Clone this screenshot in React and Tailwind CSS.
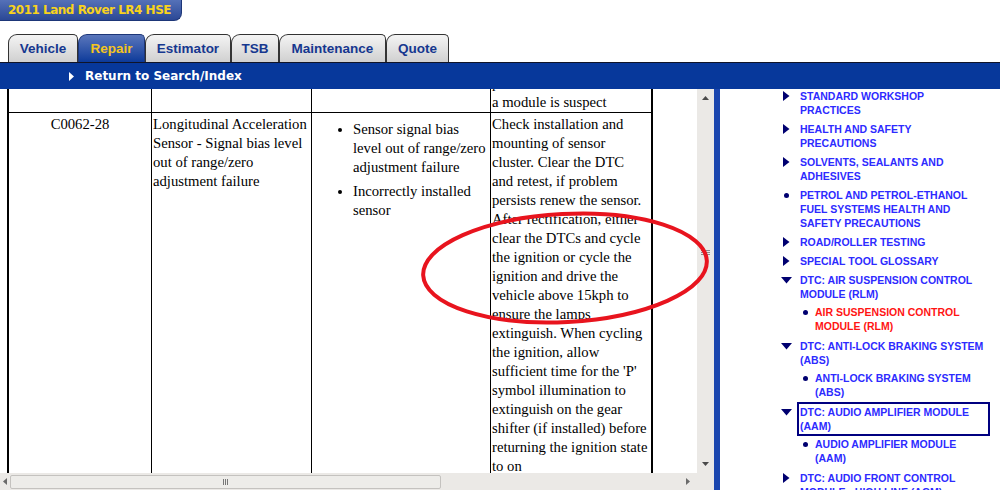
import React from "react";

const tabs = [
  { label: "Vehicle", w: "w-[70px]" },
  { label: "Repair", w: "w-[67px]", active: true },
  { label: "Estimator", w: "w-[86px]" },
  { label: "TSB", w: "w-[48px]" },
  { label: "Maintenance", w: "w-[107px]" },
  { label: "Quote", w: "w-[63px]" },
];

const tree = [
  { icon: "right", lines: ["STANDARD WORKSHOP", "PRACTICES"] },
  { icon: "right", lines: ["HEALTH AND SAFETY", "PRECAUTIONS"] },
  { icon: "right", lines: ["SOLVENTS, SEALANTS AND", "ADHESIVES"] },
  { icon: "dot", lines: ["PETROL AND PETROL-ETHANOL", "FUEL SYSTEMS HEALTH AND", "SAFETY PRECAUTIONS"] },
  { icon: "right", lines: ["ROAD/ROLLER TESTING"] },
  { icon: "right", lines: ["SPECIAL TOOL GLOSSARY"] },
  {
    icon: "down",
    lines: ["DTC: AIR SUSPENSION CONTROL", "MODULE (RLM)"],
    children: [{ lines: ["AIR SUSPENSION CONTROL", "MODULE (RLM)"], active: true }],
  },
  {
    icon: "down",
    lines: ["DTC: ANTI-LOCK BRAKING SYSTEM", "(ABS)"],
    children: [{ lines: ["ANTI-LOCK BRAKING SYSTEM", "(ABS)"] }],
  },
  {
    icon: "down",
    lines: ["DTC: AUDIO AMPLIFIER MODULE", "(AAM)"],
    boxed: true,
    children: [{ lines: ["AUDIO AMPLIFIER MODULE", "(AAM)"] }],
  },
  { icon: "right", lines: ["DTC: AUDIO FRONT CONTROL", "MODULE - HIGH LINE (AGM)"] },
];

const action = [
  "Check installation and",
  "mounting of sensor",
  "cluster. Clear the DTC",
  "and retest, if problem",
  "persists renew the sensor.",
  "After rectification, either",
  "clear the DTCs and cycle",
  "the ignition or cycle the",
  "ignition and drive the",
  "vehicle above 15kph to",
  "ensure the lamps",
  "extinguish. When cycling",
  "the ignition, allow",
  "sufficient time for the 'P'",
  "symbol illumination to",
  "extinguish on the gear",
  "shifter (if installed) before",
  "returning the ignition state",
  "to on",
];

function TreeIcon({ type }) {
  if (type === "down")
    return (
      <svg width="11" height="7" viewBox="0 0 11 7" className="mt-[4px]">
        <path d="M0 0h11L5.5 6.5z" fill="#000070" />
      </svg>
    );
  if (type === "dot")
    return <span className="mt-[5px] ml-[3px] w-[5px] h-[5px] rounded-full bg-[#000070]" />;
  return (
    <svg width="7" height="10" viewBox="0 0 7 10" className="mt-[2px] ml-[2px]">
      <path d="M0 0l6.5 5L0 10z" fill="#000070" />
    </svg>
  );
}

function Lines({ lines }) {
  return lines.map((l, i) => (
    <div key={i} className="whitespace-nowrap">
      {l}
    </div>
  ));
}

export default function App() {
  return (
    <div className="relative w-[1000px] h-[490px] overflow-hidden bg-white">
      {/* header badge */}
      <div className="h-[34px]">
        <div className="w-[182px] h-[21px] rounded-br-[8px] border-r border-b border-[#1d3678] bg-gradient-to-b from-[#5571b8] to-[#2b4895] pl-[8px] flex items-center font-['DejaVu_Sans',Verdana,sans-serif] font-bold text-[12px] tracking-[-0.5px] text-[#f8d21c]">
          2011 Land Rover LR4 HSE
        </div>
      </div>

      {/* tabs */}
      <div className="flex items-end h-[28px] pl-[8px]">
        {tabs.map((t) => (
          <div
            key={t.label}
            className={`${t.w} h-[28px] rounded-tl-[9px] rounded-tr-[5px] border border-b-0 flex items-center justify-center pt-[1px] font-['Liberation_Sans',Arial,sans-serif] font-bold text-[13.5px] ${
              t.active
                ? "border-[#1d3678] bg-gradient-to-b from-[#5a76bb] to-[#0b3a9a] text-[#f5c521]"
                : "border-[#333] bg-gradient-to-b from-[#f4f4f4] to-[#d0d0d0] text-[#16378f]"
            }`}
          >
            {t.label}
          </div>
        ))}
      </div>

      {/* nav bar */}
      <div className="h-[1px] bg-[#101428]" />
      <div className="h-[26px] bg-[#07389b] flex items-center pl-[69px] gap-[11px]">
        <svg width="5" height="9" viewBox="0 0 5 9">
          <path d="M0 0l5 4.5L0 9z" fill="#fff" />
        </svg>
        <span className="font-['DejaVu_Sans',Verdana,sans-serif] font-bold text-[12px] text-white">
          Return to Search/Index
        </span>
      </div>

      {/* content */}
      <div className="flex h-[401px]">
        <div className="w-[714px] flex flex-col">
          <div className="flex h-[384px]">
            {/* table area */}
            <div className="w-[697px] overflow-hidden font-['Liberation_Serif','Times_New_Roman',serif] text-[14.7px] leading-[19px] text-black">
              <div className="mt-[-16px] ml-[7px] w-[646px] border-l-2 border-r-2 border-black">
                <div className="flex border-b border-black">
                  <div className="w-[143px] border-r border-black" />
                  <div className="w-[160px] border-r border-black" />
                  <div className="w-[179px] border-r border-black" />
                  <div className="w-[160px] pl-[1px] pt-[1px]">
                    <div>problems remain and</div>
                    <div>a module is suspect</div>
                  </div>
                </div>
                <div className="flex h-[420px]">
                  <div className="w-[143px] border-r border-black pt-[2px] text-center">C0062-28</div>
                  <div className="w-[160px] border-r border-black pt-[2px] pl-[1px]">
                    <Lines lines={["Longitudinal Acceleration", "Sensor - Signal bias level", "out of range/zero", "adjustment failure"]} />
                  </div>
                  <div className="w-[179px] border-r border-black pt-[7px]">
                    <ul className="list-disc pl-[41px] flex flex-col gap-[5px]">
                      <li>
                        <Lines lines={["Sensor signal bias", "level out of range/zero", "adjustment failure"]} />
                      </li>
                      <li>
                        <Lines lines={["Incorrectly installed", "sensor"]} />
                      </li>
                    </ul>
                  </div>
                  <div className="w-[160px] pt-[2px] pl-[1px]">
                    <Lines lines={action} />
                  </div>
                </div>
              </div>
            </div>
            {/* vertical scrollbar */}
            <div className="w-[17px] bg-[#ebe9e6] flex flex-col items-center pt-[7px] pb-[7px]">
              <svg width="7" height="4" viewBox="0 0 7 4">
                <path d="M0 4L3.5 0 7 4z" fill="#4a4a4a" />
              </svg>
              <div className="mt-[150px] flex flex-col gap-[1px] w-[9px]">
                <div className="h-[1px] bg-[#8a8a8a]" />
                <div className="h-[1px] bg-[#8a8a8a]" />
                <div className="h-[1px] bg-[#8a8a8a]" />
              </div>
              <div className="flex-1" />
              <svg width="7" height="4" viewBox="0 0 7 4">
                <path d="M0 0h7L3.5 4z" fill="#4a4a4a" />
              </svg>
            </div>
          </div>
          {/* horizontal scrollbar */}
          <div className="flex h-[17px] bg-[#ebe9e6]">
            <div className="w-[697px] flex items-center px-[3px]">
              <svg width="4" height="7" viewBox="0 0 4 7">
                <path d="M4 0v7L0 3.5z" fill="#6a6a6a" />
              </svg>
              <div className="ml-[3px] w-[431px] h-[14px] rounded-[2px] border border-[#c4c2bf] bg-[#edece9] flex items-center justify-center gap-[1px]">
                <div className="w-[1px] h-[6px] bg-[#777]" />
                <div className="w-[1px] h-[6px] bg-[#777]" />
                <div className="w-[1px] h-[6px] bg-[#777]" />
              </div>
              <div className="flex-1" />
              <svg width="4" height="7" viewBox="0 0 4 7" className="mr-[4px]">
                <path d="M0 0v7l4-3.5z" fill="#6a6a6a" />
              </svg>
            </div>
            <div className="w-[17px]" />
          </div>
        </div>

        {/* blue divider */}
        <div className="w-[6px] bg-[#1b46ae]" />

        {/* tree pane */}
        <div className="flex-1 overflow-hidden pl-[61px] font-['Liberation_Sans',Arial,sans-serif] font-bold text-[10.5px] leading-[14px] text-[#2d2bff]">
          <div className="flex flex-col gap-[5px]">
            {tree.map((item, i) => (
              <div key={i}>
                <div className="flex">
                  <div className="w-[19px] flex items-start">
                    <TreeIcon type={item.icon} />
                  </div>
                  <div className={item.boxed ? "w-[187px] outline-2 outline-offset-1 outline-[#000080]" : ""}>
                    <Lines lines={item.lines} />
                  </div>
                </div>
                {item.children && (
                  <div className="pl-[19px] pt-[4px] pb-[1px]">
                    {item.children.map((c, j) => (
                      <div key={j} className="flex">
                        <div className="w-[15px] flex items-start">
                          <span className="mt-[5px] ml-[3px] w-[5px] h-[5px] rounded-full bg-[#000070]" />
                        </div>
                        <div className={c.active ? "text-[#ff1414]" : ""}>
                          <Lines lines={c.lines} />
                        </div>
                      </div>
                    ))}
                  </div>
                )}
              </div>
            ))}
          </div>
        </div>
      </div>

      {/* red circle annotation */}
      <svg className="absolute left-[415px] top-[205px]" width="300" height="126" viewBox="0 0 300 126">
        <ellipse cx="150" cy="63" rx="142" ry="54" transform="rotate(-3 150 63)" fill="none" stroke="#e8141e" strokeWidth="4" />
      </svg>
    </div>
  );
}
